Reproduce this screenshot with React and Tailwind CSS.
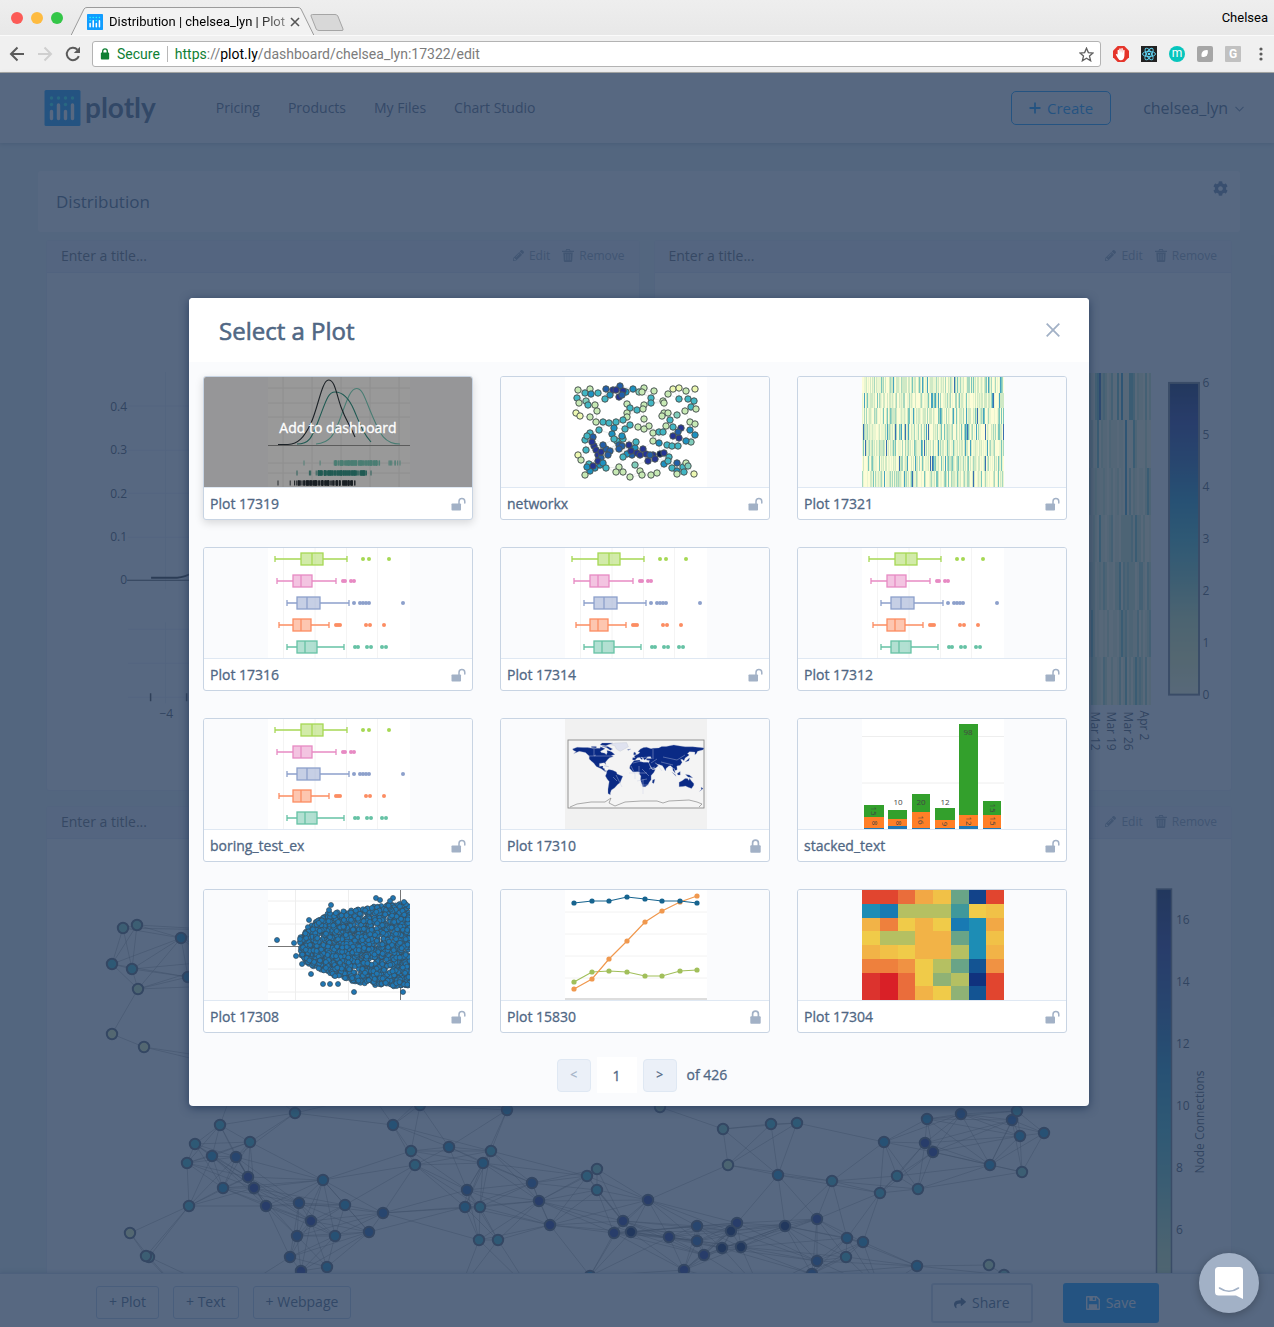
import React from "react";
import { FaCog, FaShare, FaPencilAlt } from "react-icons/fa";

/* ---------- helpers ---------- */

function makeRandom(seed) {
  let s = seed;
  return () => {
    s = (s * 1664525 + 1013904223) % 4294967296;
    return s / 4294967296;
  };
}

const YLGNBU = ["#ffffd9", "#edf8b1", "#c7e9b4", "#7fcdbb", "#41b6c4", "#1d91c0", "#225ea8", "#253494", "#081d58"];
const PALE = ["#fdfdd8", "#eaf6d0", "#cfe9c5", "#a6d8bf", "#79c6bc", "#45a3bf", "#3a6fb0"];

/* ---------- icons ---------- */

function OpenLock() {
  return (
    <svg viewBox="0 0 15 14" className="h-3.5 w-[15px]" aria-label="Public">
      <rect x="0.5" y="6.5" width="9.5" height="7" rx="0.8" fill="#a2b1c6" />
      <path d="M8 7V4.4a2.9 2.9 0 0 1 5.8 0V6" fill="none" stroke="#a2b1c6" strokeWidth="1.5" strokeLinecap="round" />
    </svg>
  );
}

function ClosedLock() {
  return (
    <svg viewBox="0 0 11 14" className="h-3.5 w-[11px]" aria-label="Private">
      <rect x="0.3" y="6.3" width="10.4" height="7.4" rx="0.9" fill="#a2b1c6" />
      <path d="M2.6 7V4a2.9 2.9 0 0 1 5.8 0V7" fill="none" stroke="#a2b1c6" strokeWidth="1.7" />
    </svg>
  );
}

function TrashIcon() {
  return (
    <svg viewBox="0 0 12 13" className="h-[13px] w-3" fill="currentColor">
      <path fillRule="evenodd" d="M4.2 0h3.6l.7 1.7H12V3H0V1.7h3.5zM4.8.9l-.4.8h3.2L7.2.9zM1.3 3.4h9.4L10.2 12q-.1 1-1 1H2.8q-.9 0-1-1zM3.4 5v6.3h.8V5zm2.2 0v6.3h.8V5zm2.2 0v6.3h.8V5z" />
    </svg>
  );
}

function SaveIcon() {
  return (
    <svg viewBox="0 0 14 14" className="size-3.5" fill="currentColor">
      <path fillRule="evenodd" d="M0 1q0-1 1-1h9.7L14 3.3V13q0 1-1 1H1q-1 0-1-1zm1.400.4v11.200H2.800V8.200h8.400v4.400h1.400V3.900L10.200 1.400V5H3.400V1.400zM6.800 1.400v2.500h2V1.400z" />
    </svg>
  );
}

function PlotlyMark({ className }) {
  return (
    <svg viewBox="0 0 36 36" className={className}>
      <rect width="36" height="36" rx="1.5" fill="#119dff" />
      {[7, 14, 21, 28].map((x) => (
        <circle key={x} cx={x} cy="8" r="1.7" fill="#25fefd" />
      ))}
      <circle cx="7" cy="14.5" r="1.7" fill="#25fefd" />
      <circle cx="21" cy="14.5" r="1.7" fill="#25fefd" />
      <path d="M7 21.5v7M14 15v13.500M21 21.500v7M28 15v13.500" stroke="#fff" strokeWidth="3.4" strokeLinecap="round" />
    </svg>
  );
}

/* ---------- browser frame ---------- */

function BrowserChrome() {
  return (
    <div className="shrink-0 border-b border-[#a9a9a5] bg-[#f0f0f0] font-[Roboto,sans-serif]">
      <div className="flex h-[35px] items-center justify-between bg-linear-to-b from-[#eeeeee] to-[#e8e8e8] pr-1.5 pl-[11px]">
        <div className="flex h-full items-center">
          <div className="flex gap-2">
            <span className="size-3 rounded-full bg-[#fc5b57]" />
            <span className="size-3 rounded-full bg-[#febb40]" />
            <span className="size-3 rounded-full bg-[#34c648]" />
          </div>
          <div className="relative ml-2 flex h-full w-[243px] items-end">
            <svg viewBox="0 0 243 35" preserveAspectRatio="none" className="absolute inset-0 h-full w-full">
              <path d="M0 35.500 13 9q1-1.500 3-1.500H227q2 0 3 1.500L243 35.500" fill="#f2f2f2" stroke="#9b9b9b" />
            </svg>
            <div className="relative flex h-[27px] w-full items-center pr-3.5 pl-4">
              <PlotlyMark className="size-4 shrink-0" />
              <span className="ml-1.5 flex-1 text-[13px] whitespace-nowrap text-black [mask-image:linear-gradient(to_right,black_80%,transparent_110%)]">
                Distribution | chelsea_lyn | Plot
              </span>
              <button type="button" aria-label="Close tab">
                <svg viewBox="0 0 10 10" className="size-2.5">
                  <path d="M1 1l8 8M9 1L1 9" stroke="#555" strokeWidth="1.6" />
                </svg>
              </button>
            </div>
          </div>
          <button type="button" aria-label="New tab" className="-ml-1 mt-2.5">
            <svg viewBox="0 0 34 18" className="h-[18px] w-[34px]">
              <path d="M2.500.5H25q2 0 2.800 1.500L33 15q.5 1.500-1 1.500H9q-2 0-2.800-1.500L1 2Q.6.5 2.500.5z" fill="#d8d8d8" stroke="#a5a5a5" />
            </svg>
          </button>
        </div>
        <span className="text-[13px] text-black">Chelsea</span>
      </div>
      <div className="flex h-[37px] items-center border-t border-[#fafafa] pr-[5px]">
        <div className="flex w-[92px] shrink-0 items-center gap-3 pl-[9px]">
          <button type="button" aria-label="Back">
            <svg viewBox="0 0 16 16" className="size-4" fill="none" stroke="#5b5b5b" strokeWidth="2">
              <path d="M15 8H2.500M8.500 1.500L2 8l6.500 6.500" />
            </svg>
          </button>
          <button type="button" aria-label="Forward">
            <svg viewBox="0 0 16 16" className="size-4" fill="none" stroke="#cfcfcf" strokeWidth="2">
              <path d="M1 8h12.500M7.500 1.500L14 8l-6.500 6.500" />
            </svg>
          </button>
          <button type="button" aria-label="Reload">
            <svg viewBox="0 0 16 16" className="size-4" fill="none">
              <path d="M13.800 10.200A6.200 6.200 0 1 1 12.400 3.600" stroke="#5b5b5b" strokeWidth="2" />
              <path d="M15 .8V7H8.800z" fill="#5b5b5b" />
            </svg>
          </button>
        </div>
        <div className="flex h-[26px] flex-1 items-center rounded-[3px] border border-[#b3b3b3] bg-white px-1.5 text-sm">
          <svg viewBox="0 0 10 13" className="ml-px h-3 w-2.5">
            <rect x="0.500" y="5" width="9" height="7.500" rx="1" fill="#0f8034" />
            <path d="M2.500 6V3.500a2.500 2.500 0 0 1 5 0V6" fill="none" stroke="#0f8034" strokeWidth="1.500" />
          </svg>
          <span className="ml-[7px] text-[#0f8034]">Secure</span>
          <span className="mx-[7px] h-4 w-px bg-[#b8b8b8]" />
          <span className="flex-1 text-[#7c7c7c]">
            <span className="text-[#0f8034]">https</span>://<span className="text-black">plot.ly</span>
            /dashboard/chelsea_lyn:17322/edit
          </span>
          <svg viewBox="0 0 16 16" className="size-[15px]">
            <path d="M8 1.300l2 4.700 5 .4-3.800 3.300 1.200 5L8 12l-4.400 2.700 1.200-5L1 6.400 6 6z" fill="none" stroke="#5f5f5f" strokeWidth="1.400" />
          </svg>
        </div>
        <div className="ml-3 flex items-center gap-3">
          <svg viewBox="0 0 16 16" className="size-4">
            <path d="M4.700 0h6.600L16 4.700v6.600L11.300 16H4.700L0 11.300V4.700z" fill="#e5352b" />
            <path d="M4.600 8.500V4.200q.8-.9 1.400 0V7l.3-4.300q.8-.8 1.400 0L8 6.800l.4-4.500q.8-.7 1.400.1v4.800l.5-3.200q.8-.6 1.300.2L11.400 10q-.5 4.300-3.600 4.300-2 0-3.500-3L2.800 8.500q.5-1.200 1.800 0z" fill="#fff" />
          </svg>
          <svg viewBox="0 0 16 16" className="size-4">
            <rect width="16" height="16" fill="#222" />
            <g fill="none" stroke="#61dafb" strokeWidth="0.9">
              <ellipse cx="8" cy="8" rx="6.500" ry="2.600" />
              <ellipse cx="8" cy="8" rx="6.500" ry="2.600" transform="rotate(60 8 8)" />
              <ellipse cx="8" cy="8" rx="6.500" ry="2.600" transform="rotate(120 8 8)" />
            </g>
            <circle cx="8" cy="8" r="1.300" fill="#61dafb" />
          </svg>
          <span className="flex size-4 items-center justify-center rounded-full bg-[#07c5bd] pb-0.5 text-xs text-white">m</span>
          <svg viewBox="0 0 16 16" className="size-4">
            <rect width="16" height="16" rx="2" fill="#a6a6a6" />
            <path d="M4.500 10.500Q4 6 7 4.500q2-.8 3.800-.3.500 3-.8 5-2 2.800-5.500 1.300z" fill="#fff" />
          </svg>
          <span className="flex size-4 items-center justify-center rounded-[1px] bg-[#c1c1c1] text-xs font-bold text-white">G</span>
          <svg viewBox="0 0 16 16" className="size-4" fill="#5b5b5b">
            <circle cx="8" cy="3" r="1.600" />
            <circle cx="8" cy="8" r="1.600" />
            <circle cx="8" cy="13" r="1.600" />
          </svg>
        </div>
      </div>
    </div>
  );
}

/* ---------- dashboard page ---------- */

function SiteHeader() {
  return (
    <header className="flex h-[70px] shrink-0 items-center bg-white pr-[30px] pl-11 shadow-[0_1px_4px_#50678455]">
      <a href="#home" className="flex items-center gap-1" aria-label="plotly home">
        <PlotlyMark className="h-9 w-[37px]" />
        <span className="pb-0.5 font-[Lato,sans-serif] text-[28px] leading-8 font-bold text-[#506784]">plotly</span>
      </a>
      <nav className="ml-[60px] flex flex-1 gap-7 text-sm text-[#5c6c86]">
        <a href="#pricing">Pricing</a>
        <a href="#products">Products</a>
        <a href="#files">My Files</a>
        <a href="#studio">Chart Studio</a>
      </nav>
      <button type="button" className="flex h-[34px] items-center gap-1.5 rounded-[5px] border border-[#119dff] px-[17px] text-[15px] text-[#119dff]">
        <svg viewBox="0 0 12 12" className="size-3">
          <path d="M6 .5v11M.5 6h11" stroke="currentColor" strokeWidth="1.800" />
        </svg>
        Create
      </button>
      <button type="button" className="ml-8 flex items-center gap-[7px] text-base text-[#506784]">
        chelsea_lyn
        <svg viewBox="0 0 9 6" className="mt-0.5 h-1.5 w-[9px]">
          <path d="M.5.8l4 4 4-4" fill="none" stroke="#7f92ac" strokeWidth="1.200" />
        </svg>
      </button>
    </header>
  );
}

function Panel({ label, children }) {
  return (
    <section className="min-w-0 rounded-[3px] border border-[#e6ebf6] bg-white">
      <div className="flex h-8 items-center border-b border-[#e2e8f4] bg-[#eef2fa] px-3.5 pb-0.5">
        <input
          aria-label={label}
          placeholder="Enter a title..."
          className="min-w-0 flex-1 bg-transparent text-sm outline-none placeholder:text-[#656b75]"
        />
        <div className="flex gap-3 text-xs text-[#95a4ba]">
          <button type="button" className="flex items-center gap-[5px]">
            <FaPencilAlt className="size-[11px]" />
            Edit
          </button>
          <button type="button" className="flex items-center gap-[5px]">
            <TrashIcon />
            Remove
          </button>
        </div>
      </div>
      {children}
    </section>
  );
}

const tickText = { fontFamily: "Open Sans, sans-serif", fontSize: 12, fill: "#4d5563" };

function DistributionChart() {
  return (
    <svg viewBox="47 273 591 517" className="block w-full">
      <g stroke="#e9edf5">
        {[406, 450, 493, 537, 629, 663, 697].map((y) => (
          <line key={y} x1="128" x2="630" y1={y} y2={y} />
        ))}
        <path d="M165.500 372V589M165.500 622V703" />
      </g>
      <path d="M127 580H630" stroke="#444" />
      <path d="M151 577.500H177Q185 577 193 572" fill="none" stroke="#333" strokeWidth="2" />
      <path d="M150.500 693v8M186.500 693v8" stroke="#444" strokeWidth="1.500" />
      <g {...tickText} textAnchor="end">
        <text x="127" y="411">0.4</text>
        <text x="127" y="454">0.3</text>
        <text x="127" y="498">0.2</text>
        <text x="127" y="541">0.1</text>
        <text x="127" y="584">0</text>
        <text x="173" y="718">−4</text>
      </g>
    </svg>
  );
}

function Stripes({ x, y, width, height, step, seed }) {
  const random = makeRandom(seed);
  const cells = [];
  const rowHeight = height / 7;
  for (let row = 0; row < 7; row += 1) {
    for (let cx = 0; cx < width; cx += step) {
      const r = random();
      const level = r < 0.3 ? 0 : r < 0.56 ? 1 : r < 0.8 ? 2 : r < 0.91 ? 3 : r < 0.96 ? 4 : r < 0.985 ? 5 : 6;
      cells.push(
        <rect key={`${row}-${cx}`} x={x + cx} y={y + row * rowHeight} width={Math.min(step, width - cx)} height={rowHeight} fill={PALE[level]} />
      );
    }
  }
  return <g shapeRendering="crispEdges">{cells}</g>;
}

function ColorScale({ id }) {
  return (
    <linearGradient id={id} x1="0" y1="1" x2="0" y2="0">
      {YLGNBU.map((color, i) => (
        <stop key={color} offset={i / 8} stopColor={color} />
      ))}
    </linearGradient>
  );
}

function CalendarChart() {
  return (
    <svg viewBox="654 273 577 517" className="block w-full">
      <ColorScale id="scale-calendar" />
      <Stripes x={700} y={373} width={450} height={332} step={2} seed={19} />
      <rect x="1168.500" y="383" width="30" height="312" fill="url(#scale-calendar)" stroke="#757b85" strokeWidth="2" />
      <g {...tickText}>
        {[6, 5, 4, 3, 2, 1, 0].map((n, i) => (
          <text key={n} x="1202" y={387 + i * 52}>{n}</text>
        ))}
        <text transform="translate(1090 712) rotate(90)">Mar 12</text>
        <text transform="translate(1106 712) rotate(90)">Mar 19</text>
        <text transform="translate(1123 712) rotate(90)">Mar 26</text>
        <text transform="translate(1139 711) rotate(90)">Apr 2</text>
      </g>
    </svg>
  );
}

/* x, y, colour level */
const NODES = [
  [123, 928, 3], [137, 925, 3], [112, 964, 4], [132, 969, 4], [181, 938, 5], [138, 989, 2], [188, 977, 5], [112, 1034, 1], [144, 1047, 1],
  [225, 930, 4], [230, 960, 4], [240, 985, 4], [230, 1060, 3], [240, 1070, 3], [440, 1080, 4], [372, 1095, 4], [520, 1070, 4], [600, 1075, 3],
  [295, 1113, 4], [220, 1125, 4], [195, 1144, 4], [250, 1142, 4], [212, 1156, 5], [187, 1163, 4], [236, 1157, 6], [248, 1177, 7],
  [223, 1188, 5], [254, 1188, 7], [189, 1206, 4], [266, 1206, 7], [323, 1180, 5], [299, 1203, 6], [345, 1205, 5], [383, 1213, 6],
  [311, 1221, 7], [297, 1236, 6], [335, 1236, 5], [369, 1232, 6], [290, 1257, 6], [301, 1271, 7], [327, 1267, 5], [130, 1233, 1],
  [149, 1257, 3], [146, 1256, 3], [393, 1125, 5], [411, 1151, 4], [449, 1147, 5], [415, 1165, 4], [491, 1151, 4], [483, 1163, 5],
  [507, 1110, 5], [420, 1105, 4], [467, 1190, 6], [465, 1207, 5], [480, 1207, 4], [479, 1240, 4], [498, 1240, 4], [532, 1183, 6],
  [539, 1201, 7], [550, 1225, 7], [587, 1176, 4], [597, 1169, 3], [597, 1190, 4], [623, 1221, 7], [614, 1233, 7], [631, 1232, 8],
  [660, 1107, 2], [723, 1129, 3], [771, 1124, 4], [797, 1123, 4], [728, 1165, 2], [778, 1175, 5], [832, 1181, 4], [884, 1142, 5],
  [925, 1143, 7], [933, 1152, 7], [927, 1119, 5], [961, 1114, 6], [1012, 1120, 6], [1017, 1111, 4], [1020, 1136, 5], [1044, 1133, 5],
  [990, 1165, 5], [1022, 1172, 3], [897, 1176, 4], [880, 1193, 4], [918, 1189, 4], [648, 1200, 7], [669, 1237, 7], [697, 1226, 6],
  [737, 1223, 7], [731, 1231, 8], [697, 1241, 6], [704, 1255, 7], [722, 1248, 8], [741, 1247, 8], [684, 1270, 7], [785, 1226, 8],
  [817, 1219, 7], [847, 1238, 5], [863, 1242, 5], [846, 1257, 4], [817, 1261, 6], [812, 1274, 6], [917, 1266, 5], [989, 1265, 2],
  [1004, 1275, 3], [180, 1292, 4], [230, 1295, 4], [460, 1290, 4], [530, 1290, 4], [590, 1276, 5], [760, 1290, 5], [880, 1290, 5],
];

function linksBetween(nodes, rx, ry) {
  const links = [];
  nodes.forEach((a, i) => {
    nodes.slice(i + 1).forEach((b) => {
      const d = ((a[0] - b[0]) / rx) ** 2 + ((a[1] - b[1]) / ry) ** 2;
      if (d < 1) links.push(`M${a[0]} ${a[1]}L${b[0]} ${b[1]}`);
    });
  });
  return links.join("");
}

function NetworkChart() {
  return (
    <svg viewBox="47 839 1184 520" className="block w-full">
      <ColorScale id="scale-network" />
      <path d={linksBetween(NODES, 110, 58)} stroke="#888" strokeOpacity="0.450" fill="none" />
      {NODES.map(([x, y, level], i) => (
        <circle key={i} cx={x} cy={y} r="5.200" fill={YLGNBU[level]} stroke="#5a6272" strokeWidth="2" />
      ))}
      <rect x="1156.500" y="889" width="15" height="480" fill="url(#scale-network)" stroke="#757b85" strokeWidth="1.500" />
      <g {...tickText}>
        {[16, 14, 12, 10, 8, 6].map((n, i) => (
          <text key={n} x="1176" y={924 + i * 62}>{n}</text>
        ))}
        <text textAnchor="middle" transform="translate(1204 1122) rotate(-90)">Node Connections</text>
      </g>
    </svg>
  );
}

function AddButton({ children }) {
  return (
    <button type="button" className="h-[33px] rounded-[3px] border border-[#bccde8] px-3 pb-px text-sm text-[#506784]">
      {children}
    </button>
  );
}

function Dashboard() {
  return (
    <div className="flex h-full flex-col bg-[#e9f4f4]">
      <SiteHeader />
      <main className="min-h-0 flex-1 overflow-hidden pt-7 pr-[34px] pl-[38px]">
        <div className="flex h-[61px] justify-between rounded-[3px] bg-white pr-3 pl-[18px]">
          <h1 className="self-center text-[17px] text-[#506784]">Distribution</h1>
          <button type="button" aria-label="Dashboard settings" className="mt-2.5 self-start">
            <FaCog className="size-[15px] text-[#7388a8]" />
          </button>
        </div>
        <div className="mt-2 grid grid-cols-[593fr_578fr] gap-x-3.5 gap-y-[15px] pr-2 pl-2">
          <Panel label="Title of the distribution plot">
            <DistributionChart />
          </Panel>
          <Panel label="Title of the calendar plot">
            <CalendarChart />
          </Panel>
          <div className="col-span-2">
            <Panel label="Title of the network plot">
              <NetworkChart />
            </Panel>
          </div>
        </div>
      </main>
      <footer className="flex h-[54px] shrink-0 items-center justify-between border-t border-[#d0d8e6] bg-white pr-[115px] pl-24 shadow-[0_-1px_4px_#50678444]">
        <div className="flex gap-3.5 pt-1">
          <AddButton>+ Plot</AddButton>
          <AddButton>+ Text</AddButton>
          <AddButton>+ Webpage</AddButton>
        </div>
        <div className="flex gap-[30px] pt-1">
          <button type="button" className="flex h-10 items-center gap-1.5 rounded-[3px] border-2 border-[#cfd8e8] px-[21px] text-sm text-[#506784]">
            <FaShare className="size-3" />
            Share
          </button>
          <button type="button" className="flex h-10 items-center gap-1.5 rounded-[3px] bg-[#119dff] px-[23px] text-sm text-white">
            <SaveIcon />
            Save
          </button>
        </div>
      </footer>
    </div>
  );
}

/* ---------- thumbnails ---------- */

function Thumb({ bg = "#ffffff", children }) {
  return (
    <svg viewBox="0 0 142 110" className="h-[110px] w-[142px]">
      <rect width="142" height="110" fill={bg} />
      {children}
    </svg>
  );
}

function rug(seed, y, from, to, denseFrom, denseTo) {
  const random = makeRandom(seed);
  let d = `M${from} ${y}v5M${to} ${y}v5`;
  for (let i = 0; i < 130; i += 1) {
    const x = denseFrom + random() * (denseTo - denseFrom);
    d += `M${x.toFixed(1)} ${y}v5`;
  }
  for (let i = 0; i < 9; i += 1) {
    const x = from + 8 + random() * (to - from - 8);
    d += `M${x.toFixed(1)} ${y}v5`;
  }
  return d;
}

function KdeThumb() {
  return (
    <Thumb>
      <path d="M15 0V110M44 0V110M73 0V110M102 0V110M131 0V110M0 11H142M0 26H142M0 40H142M0 86H142M0 96H142" stroke="#eee" />
      <path d="M0 68.500H142" stroke="#999" />
      <g fill="none" strokeWidth="1.100">
        <path d="M48 67C62 66 66 58 72 42S82 11.500 88.500 11.500 97 22 104 38 115 67 132 67" stroke="#7ad0c0" />
        <path d="M29 67C42 67 44 60 51 42S60 15 67 15 80 19 86 33 95 56 103 65" stroke="#34968a" />
        <path d="M10 67.500H20C30 67 36 61 43 46S54 3 60.500 3 68 16 73 30 82 48 87 60" stroke="#303a42" />
      </g>
      <path d={rug(3, 83.500, 36, 132, 66, 112)} stroke="#7ad0c0" strokeWidth="0.900" />
      <path d={rug(8, 93.500, 29, 103, 50, 97)} stroke="#34968a" strokeWidth="0.900" />
      <path d={rug(12, 103.500, 10, 87, 30, 85)} stroke="#28323a" strokeWidth="0.900" />
    </Thumb>
  );
}

const GRAPH_DOTS = [
  [13, 13, 2], [20, 16, 4], [25, 12, 2], [26, 17, 5], [33, 16, 4], [12, 21, 4], [14, 26, 2], [21, 24, 3], [23, 28, 4], [30, 28, 2], [32, 34, 2],
  [11, 36, 1], [15, 39, 1], [25, 40, 2], [31, 45, 2], [41, 12, 6], [48, 13, 7], [55, 9, 6], [45, 18, 5], [54, 20, 7], [61, 15, 5], [68, 12, 5],
  [40, 22, 4], [58, 14, 7], [74, 15, 3], [62, 27, 2], [65, 31, 4], [72, 33, 4], [62, 36, 2], [62, 40, 2], [38, 45, 4], [44, 46, 4], [51, 45, 4],
  [49, 51, 5], [58, 43, 4], [65, 48, 4], [60, 52, 4], [34, 53, 4], [47, 57, 5], [25, 56, 4], [20, 63, 4], [28, 60, 6], [21, 73, 4], [29, 69, 7],
  [22, 59, 4], [27, 65, 7], [31, 73, 7], [41, 72, 6], [33, 78, 7], [36, 81, 6], [30, 91, 5], [25, 94, 5], [35, 88, 5], [52, 64, 4], [54, 68, 6],
  [58, 62, 4], [67, 78, 6], [62, 77, 5], [70, 71, 5], [72, 76, 7], [24, 87, 4], [51, 13, 7], [57, 18, 6],
  [38, 68, 6], [45, 74, 6], [36, 75, 7], [43, 78, 6], [33, 84, 7], [38, 86, 5], [13, 78, 1], [16, 83, 2], [20, 98, 2], [22, 90, 5], [28, 89, 7],
  [41, 91, 4], [49, 62, 4], [57, 59, 5], [64, 68, 7], [57, 69, 6], [66, 74, 7], [75, 78, 7], [58, 80, 4], [54, 72, 6], [71, 65, 4], [54, 90, 2],
  [58, 95, 2], [51, 95, 2], [65, 100, 2], [70, 88, 3], [73, 50, 2], [79, 11, 2], [77, 15, 2], [89, 14, 2], [103, 17, 2], [108, 12, 1], [114, 11, 1],
  [121, 14, 2], [130, 12, 1], [86, 21, 4], [86, 26, 4], [98, 24, 2], [99, 26, 2], [114, 22, 4], [123, 22, 4], [129, 24, 4], [79, 28, 2], [78, 32, 2],
  [126, 30, 4], [120, 34, 2], [131, 32, 2], [99, 36, 2], [103, 36, 2], [97, 39, 2], [112, 38, 3], [79, 42, 2], [105, 43, 4], [84, 49, 2], [79, 52, 2],
  [101, 49, 2], [108, 50, 4], [125, 45, 2], [130, 47, 2], [88, 56, 2], [94, 55, 4], [98, 55, 4], [116, 51, 7], [108, 59, 7], [114, 61, 7],
  [113, 55, 6], [125, 53, 5], [130, 58, 5], [126, 65, 3], [121, 64, 5], [88, 64, 2], [94, 66, 5], [102, 68, 4], [107, 69, 4], [113, 69, 4],
  [78, 72, 7], [81, 77, 7], [83, 84, 7], [88, 78, 7], [95, 77, 8], [99, 76, 7], [90, 82, 7], [85, 78, 6], [104, 80, 4], [99, 87, 5], [103, 84, 4],
  [112, 86, 6], [107, 91, 4], [112, 94, 5], [118, 90, 4], [119, 95, 4], [121, 86, 2], [123, 89, 3], [112, 97, 2], [129, 97, 1], [75, 94, 2],
  [77, 98, 2], [86, 98, 2], [92, 96, 2],
];

function GraphThumb() {
  return (
    <Thumb>
      <path d={linksBetween(GRAPH_DOTS, 14, 12)} stroke="#bbb" strokeWidth="0.300" fill="none" />
      {GRAPH_DOTS.map(([x, y, level], i) => (
        <circle key={i} cx={x} cy={y} r="3.200" fill={YLGNBU[level]} stroke="#4a5553" strokeWidth="1" />
      ))}
    </Thumb>
  );
}

function StripesThumb() {
  return (
    <Thumb>
      <Stripes x={0} y={0} width={142} height={110} step={1} seed={77} />
    </Thumb>
  );
}

const BOXES = [
  { y: 11, color: "#a6d854", lo: 7, hi: 79, q1: 33, q3: 55, med: 44, dots: [95, 101, 121] },
  { y: 33, color: "#e78ac3", lo: 9, hi: 68, q1: 25, q3: 44, med: 33, dots: [75, 77, 83, 86] },
  { y: 55, color: "#8da0cb", lo: 19, hi: 81, q1: 29, q3: 52, med: 39, dots: [86, 92, 95, 98, 101, 135] },
  { y: 77, color: "#fc8d62", lo: 11, hi: 61, q1: 25, q3: 43, med: 33, dots: [68, 70, 72, 98, 102, 116] },
  { y: 99, color: "#66c2a5", lo: 19, hi: 76, q1: 29, q3: 49, med: 37, dots: [87, 90, 99, 103, 114, 118] },
];

function BoxThumb() {
  return (
    <Thumb>
      <path d="M15.500 0V110M47 0V110M78.500 0V110M109.500 0V110" stroke="#f4f4f4" />
      {BOXES.map((b) => (
        <g key={b.y} stroke={b.color} fill="none" strokeWidth="1.300">
          <path d={`M${b.lo} ${b.y}H${b.q1}M${b.q3} ${b.y}H${b.hi}M${b.lo} ${b.y - 3}v6M${b.hi} ${b.y - 3}v6`} />
          <rect x={b.q1} y={b.y - 6} width={b.q3 - b.q1} height="12" fill={b.color} fillOpacity="0.500" />
          <path d={`M${b.med} ${b.y - 6}v12`} />
          {b.dots.map((x) => (
            <circle key={x} cx={x} cy={b.y} r="2" fill={b.color} stroke="none" />
          ))}
        </g>
      ))}
    </Thumb>
  );
}

/* longitude / latitude outlines */
const LAND = [
  [-168, 66, -156, 71, -140, 70, -128, 70, -115, 68, -95, 68, -94, 72, -85, 68, -82, 67, -94, 60, -92, 57, -82, 55, -79, 51, -76, 56, -77, 62, -70, 61, -64, 58, -56, 52, -65, 49, -60, 46, -70, 43, -75, 38, -81, 31, -80, 25, -84, 30, -97, 28, -97, 20, -90, 21, -87, 21, -88, 16, -83, 14, -83, 9, -77, 8, -82, 7, -92, 14, -105, 20, -112, 29, -117, 33, -124, 40, -124, 48, -134, 57, -150, 60, -160, 56, -165, 54, -158, 59, -165, 62],
  [-77, 8, -72, 12, -62, 10, -52, 5, -50, 0, -35, -6, -39, -15, -42, -23, -48, -27, -57, -37, -65, -42, -68, -50, -68, -55, -74, -52, -74, -40, -71, -20, -76, -14, -81, -5, -78, 1],
  [-17, 15, -16, 22, -9, 31, -5, 36, 10, 37, 11, 33, 20, 31, 32, 31, 35, 28, 38, 18, 43, 12, 51, 12, 47, 4, 40, -4, 40, -15, 35, -22, 32, -28, 25, -34, 18, -34, 14, -22, 12, -15, 13, -5, 9, 0, 9, 5, 4, 6, -8, 5],
  [-9, 37, -9, 43, -2, 44, -5, 48, 2, 51, 8, 54, 10, 58, 5, 59, 12, 66, 20, 70, 28, 71, 40, 67, 45, 68, 60, 69, 68, 73, 80, 73, 100, 77, 112, 75, 130, 72, 150, 72, 170, 70, 180, 69, 178, 64, 163, 60, 160, 54, 156, 51, 156, 58, 142, 59, 136, 54, 141, 50, 130, 42, 127, 35, 122, 39, 118, 38, 122, 31, 117, 23, 108, 21, 109, 12, 105, 9, 101, 13, 104, 2, 98, 9, 97, 17, 91, 22, 87, 21, 80, 15, 78, 8, 73, 17, 70, 22, 61, 25, 57, 26, 50, 30, 56, 25, 59, 22, 52, 16, 44, 13, 39, 20, 34, 30, 36, 36, 27, 37, 29, 41, 41, 41, 38, 46, 30, 45, 28, 41, 22, 37, 19, 42, 13, 45, 18, 40, 15, 38, 9, 44, 3, 42, -2, 37],
  [114, -22, 114, -34, 124, -33, 131, -32, 138, -35, 147, -38, 153, -30, 153, -25, 146, -18, 142, -11, 140, -17, 136, -12, 130, -12, 122, -18],
  [44, -16, 50, -14, 47, -25, 43, -23], [95, 5, 106, -6, 104, -2], [109, 1, 117, 7, 117, -3, 111, -3], [131, -1, 141, -3, 150, -10, 138, -8],
  [130, 32, 140, 35, 142, 43, 140, 41], [-6, 50, 1, 52, -3, 58, -6, 56], [172, -35, 178, -38, 168, -46, 173, -41], [-23, 64, -14, 66, -20, 63],
  [-118, 70, -105, 69, -105, 73, -118, 73], [-90, 73, -75, 73, -62, 66, -68, 63, -78, 70], [-95, 77, -80, 75, -62, 82, -90, 82], [-84, 22, -75, 20, -72, 19],
];

function landPath(points) {
  let d = "";
  for (let i = 0; i < points.length; i += 2) {
    const x = 3 + ((points[i] + 180) / 360) * 136;
    const y = 21 + ((90 - points[i + 1]) / 180) * 68;
    d += `${i ? "L" : "M"}${x.toFixed(1)} ${y.toFixed(1)}`;
  }
  return `${d}Z`;
}

function MapThumb() {
  return (
    <Thumb bg="#f1f1f1">
      <rect x="3" y="21" width="136" height="68" fill="#f4f4f4" stroke="#8a8a8a" strokeWidth="0.900" />
      <path d={landPath([-55, 82, -25, 83, -20, 72, -42, 60, -52, 66, -56, 75, -70, 78])} fill="#dfe2ef" stroke="#b9bdca" strokeWidth="0.300" />
      {LAND.map((points, i) => (
        <path key={i} d={landPath(points)} fill="#0a2a85" stroke="#9ba5c8" strokeWidth="0.300" />
      ))}
      <g fill="none" stroke="#c6cce2" strokeWidth="0.400">
        <path d="M23 37H48M29 30V37L31 36M51 56L54 62 57 68M48 58L52 62M64 54H82M66 47L70 55V60M74 47V56M77 50L84 57M72 62L82 60M75 66H84M78 60V75M68 44L76 42M72 39L84 38M92 45L97 52M98 38L112 41 120 36M96 43L108 46M86 44L92 40M104 48L110 50M84 50L90 48M88 30V40" />
      </g>
      <path d="M5 88L12 85 26 83 32 83 40 83 46 79 44 84 50 87 60 83 76 82 92 82 98 84 104 82 124 81 132 83 137 85 134 88" fill="none" stroke="#777" strokeWidth="0.600" />
    </Thumb>
  );
}

const BARS = [
  [2, 20, 86, 98, 109], [26, 19, 91, 100, 107], [50, 18, 75, 93, 109], [73, 20, 89, 101, 109], [97, 19, 5, 96, 107], [121, 18, 82, 96, 109],
];

function BarThumb() {
  return (
    <Thumb>
      <path d="M0 17.500H142M0 64H142" stroke="#eee" />
      {BARS.map(([x, w, green, orange, blue]) => (
        <g key={x} shapeRendering="crispEdges">
          <rect x={x} y={green} width={w} height={orange - green} fill="#33a02c" />
          <rect x={x} y={orange} width={w} height={blue - orange} fill="#ff7f27" />
          <rect x={x} y={blue} width={w} height={110 - blue} fill="#1f77b4" />
        </g>
      ))}
      <g fontFamily="Open Sans, sans-serif" fontSize="8" fill="#444" textAnchor="middle">
        <text x="36" y="86">10</text>
        <text x="83" y="86">12</text>
        <text x="59" y="86">20</text>
        <text x="106" y="16">98</text>
        <text transform="translate(9 92) rotate(90)">15</text>
        <text transform="translate(10 104) rotate(90)">8</text>
        <text transform="translate(34 104) rotate(90)">8</text>
        <text transform="translate(56 101) rotate(90)">16</text>
        <text transform="translate(80 105) rotate(90)">9</text>
        <text transform="translate(104 102) rotate(90)">12</text>
        <text transform="translate(128 89) rotate(90)">15</text>
        <text transform="translate(128 102) rotate(90)">15</text>
      </g>
    </Thumb>
  );
}

function scatterDots() {
  const random = makeRandom(41);
  const top = (x) => (x < 40 ? 50 - (x - 28) * 1.1 : x < 60 ? 37 - (x - 40) * 0.7 : x < 100 ? 23 - (x - 60) * 0.12 : 17 - (x - 100) * 0.11);
  const bottom = (x) => (x < 40 ? 62 + (x - 28) : x < 70 ? 74 + (x - 40) * 0.450 : x < 100 ? 88 + (x - 70) * 0.220 : 95 + (x - 100) * 0.060);
  const dots = [];
  for (let i = 0; i < 1500; i += 1) {
    const x = 32 + random() ** 0.85 * 110;
    const t = top(x);
    dots.push([x, t + random() * (bottom(x) - t)]);
  }
  return dots.concat([
    [9, 50], [26, 53], [32, 49], [28, 66], [34, 74], [41, 30], [43, 84], [55, 94], [62, 94], [70, 94], [86, 102], [63, 15], [61, 20],
    [108, 8], [112, 10], [125, 8], [122, 11], [135, 102], [136, 12],
  ]);
}
const SCATTER = scatterDots();

function ScatterThumb() {
  return (
    <Thumb>
      <path d="M27.500 0V110M80.500 0V110M0 11H142M0 34H142M0 79H142M0 102H142" stroke="#eee" />
      <path d="M0 56.500H142M132.500 0V110" stroke="#777" />
      {SCATTER.map(([x, y], i) => (
        <circle key={i} cx={x.toFixed(1)} cy={y.toFixed(1)} r="2.500" fill="#1f77b4" stroke="#3a4a58" strokeWidth="0.700" />
      ))}
    </Thumb>
  );
}

const LINE_X = [9, 27, 44, 62, 80, 97, 115, 132];
const SERIES = [
  ["#a1bf5a", [92, 82, 81, 82, 86, 86, 81, 80]],
  ["#f0984e", [99, 89, 69, 51, 32, 21, 12, 6]],
  ["#17648f", [13, 11, 11, 7, 9, 11, 11, 13]],
];

function LineThumb() {
  return (
    <Thumb>
      <path d="M0 22H142M0 44H142M0 66H142M0 88H142" stroke="#f2f2f2" />
      <path d="M0 109H142" stroke="#bbb" />
      {SERIES.map(([color, ys]) => (
        <g key={color} fill={color}>
          <polyline points={LINE_X.map((x, i) => `${x},${ys[i]}`).join(" ")} fill="none" stroke={color} strokeWidth="1.200" />
          {LINE_X.map((x, i) => (
            <circle key={x} cx={x} cy={ys[i]} r="2.600" />
          ))}
        </g>
      ))}
    </Thumb>
  );
}

const HEAT = [
  ["#e1452f", "#e1452f", "#ea6d3b", "#f2a845", "#f1c147", "#69a487", "#12438a", "#e1452f"],
  ["#1d8db5", "#187ab3", "#b5c062", "#b5c062", "#b5c062", "#3f989b", "#f0cb49", "#f1c147"],
  ["#f2b347", "#ee803d", "#f0cb49", "#f2b347", "#f0cb49", "#187ab3", "#1d8db5", "#f2a845"],
  ["#f0cb49", "#b5c062", "#b5c062", "#f2b347", "#f2b347", "#69a487", "#1d8db5", "#f1c147"],
  ["#f2b347", "#f1c147", "#f0cb49", "#f2b347", "#f2b347", "#b5c062", "#1d8db5", "#f2b347"],
  ["#ee803d", "#ee803d", "#f09243", "#f0cb49", "#b5c062", "#69a487", "#135493", "#f09243"],
  ["#dc332e", "#d92027", "#ea6d3b", "#f0cb49", "#8fb275", "#b5c062", "#10327e", "#e1452f"],
  ["#dc332e", "#d92027", "#ea6d3b", "#f2b347", "#f0cb49", "#8fb275", "#135493", "#e1452f"],
];

function HeatThumb() {
  return (
    <Thumb>
      <g shapeRendering="crispEdges">
        {HEAT.map((row, r) =>
          row.map((color, c) => (
            <rect key={`${r}-${c}`} x={c * 17.75} y={r * 13.75} width="17.75" height="13.75" fill={color} />
          ))
        )}
      </g>
    </Thumb>
  );
}

/* ---------- dialog ---------- */

const PLOTS = [
  { name: "Plot 17319", Art: KdeThumb, hovered: true },
  { name: "networkx", Art: GraphThumb },
  { name: "Plot 17321", Art: StripesThumb },
  { name: "Plot 17316", Art: BoxThumb },
  { name: "Plot 17314", Art: BoxThumb },
  { name: "Plot 17312", Art: BoxThumb },
  { name: "boring_test_ex", Art: BoxThumb },
  { name: "Plot 17310", Art: MapThumb, locked: true },
  { name: "stacked_text", Art: BarThumb },
  { name: "Plot 17308", Art: ScatterThumb },
  { name: "Plot 15830", Art: LineThumb, locked: true },
  { name: "Plot 17304", Art: HeatThumb },
];

function PlotCard({ plot }) {
  const { name, Art, hovered, locked } = plot;
  return (
    <article
      className={
        hovered
          ? "overflow-hidden rounded-[3px] border border-[#c8d4e3] bg-white shadow-[0_3px_8px_rgba(0,0,0,0.14)]"
          : "overflow-hidden rounded-[3px] border border-[#c8d4e3] bg-white"
      }
    >
      <div className="relative flex justify-center border-b border-[#dfe8f3] bg-[#fafbfd] pl-0.5">
        <Art />
        {hovered && (
          <button type="button" className="absolute inset-0 bg-black/40 pb-2 text-sm text-white">
            Add to dashboard
          </button>
        )}
      </div>
      <div className="flex h-[31px] items-center justify-between px-1.5 text-sm text-[#506784]">
        <h3>{name}</h3>
        {locked ? (
          <span className="pr-0.5">
            <ClosedLock />
          </span>
        ) : (
          <OpenLock />
        )}
      </div>
    </article>
  );
}

function SelectPlotDialog() {
  return (
    <div
      role="dialog"
      aria-labelledby="dialog-title"
      className="w-full max-w-[900px] overflow-hidden rounded-[4px] bg-[#fafbfd] shadow-[0_2px_10px_#2a3f5f] [-webkit-text-stroke:0.3px]"
    >
      <div className="flex h-16 items-center justify-between bg-white pr-[29px] pl-[30px]">
        <h2 id="dialog-title" className="pt-0.5 text-2xl leading-8 text-[#506784] [-webkit-text-stroke:0.6px]">
          Select a Plot
        </h2>
        <button type="button" aria-label="Close">
          <svg viewBox="0 0 14 14" className="size-3.5">
            <path d="M.7.7l12.600 12.600M13.300.7L.7 13.300" stroke="#a2b1c6" strokeWidth="1.800" />
          </svg>
        </button>
      </div>
      <div className="grid grid-cols-3 gap-[27px] pt-3.5 pr-[22px] pl-3.5">
        {PLOTS.map((plot) => (
          <PlotCard key={plot.name} plot={plot} />
        ))}
      </div>
      <div className="flex items-center justify-center gap-1.5 pt-6 pb-[13px] pl-1.5 text-sm text-[#506784]">
        <button type="button" aria-label="Previous page" className="h-[33px] w-[34px] rounded-[4px] border border-[#dfe8f3] bg-[#ebf0f8] text-xs text-[#a2b1c6]">
          &lt;
        </button>
        <input aria-label="Page" defaultValue="1" className="h-9 w-10 bg-white text-center text-sm outline-none" />
        <button type="button" aria-label="Next page" className="h-[33px] w-[34px] rounded-[4px] border border-[#dfe8f3] bg-[#ebf0f8] text-xs">
          &gt;
        </button>
        <span className="ml-1">of 426</span>
      </div>
    </div>
  );
}

export default function App() {
  return (
    <div className="flex h-screen flex-col overflow-hidden font-['Open_Sans',sans-serif]">
      <BrowserChrome />
      <div className="relative min-h-0 flex-1">
        <Dashboard />
        <div className="absolute inset-0 flex items-center justify-center bg-[#2a3f5f]/79 pt-1 pl-1">
          <SelectPlotDialog />
        </div>
        <button
          type="button"
          aria-label="Open chat"
          className="absolute right-[15px] bottom-3.5 flex size-[60px] items-center justify-center rounded-full bg-[#a2b1c6] shadow-[0_2px_8px_rgba(0,0,0,0.25)]"
        >
          <svg viewBox="0 0 28 32" className="h-8 w-7">
            <path d="M3.500 0h21Q28 0 28 3.500V32l-7-3.500H3.500Q0 28.500 0 25V3.500Q0 0 3.500 0z" fill="#fff" />
            <path d="M4.500 21q9.500 6.500 19 0" fill="none" stroke="#a2b1c6" strokeWidth="1.600" strokeLinecap="round" />
          </svg>
        </button>
      </div>
    </div>
  );
}
